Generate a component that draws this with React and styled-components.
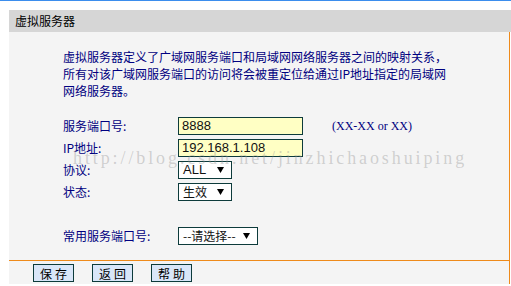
import React from "react";
import styled, { createGlobalStyle } from "styled-components";

const GlobalStyle = createGlobalStyle`
  html, body { margin: 0; padding: 0; background: #ffffff; }
  body {
    font-family: "Noto Sans CJK SC", "Liberation Sans", sans-serif;
    font-size: 12px;
  }
`;

const Page = styled.div`
  border-top: 1px solid #3b8ded;
  padding: 9px 0 0 9px;
  width: 502px;
`;

const Header = styled.div`
  height: 22px;
  line-height: 22px;
  background: #d6d6d6;
  color: #000;
  padding-left: 6px;
  font-size: 12px;
`;

const Body = styled.div`
  position: relative;
  background: #f4f4f4;
  border-right: 1px solid #ee8a1a;
  margin-right: 1px;
  height: 252px;
  display: flex;
  flex-direction: column;
`;

const Desc = styled.div`
  margin: 16px 0 0 54px;
  line-height: 17px;
  color: #000080;
  font-size: 12px;
  white-space: nowrap;
`;

const Form = styled.div`
  margin: 16px 0 0 54px;
  display: grid;
  grid-template-columns: 115px auto;
  grid-auto-rows: 22px;
  align-items: center;
  justify-items: start;
`;

const Label = styled.div`
  color: #000080;
  font-size: 12px;
  line-height: 22px;
`;

const Field = styled.div`
  display: flex;
  align-items: center;
`;

const Input = styled.div`
  box-sizing: border-box;
  width: ${(p) => p.$w}px;
  height: 18px;
  border: 1px solid #0d3b3b;
  background: #ffffc4;
  padding-left: 3px;
  font-family: "Liberation Sans", Arial, sans-serif;
  font-size: 13px;
  line-height: 16px;
  color: #111;
`;

const Select = styled.div`
  box-sizing: border-box;
  width: ${(p) => p.$w}px;
  height: 18px;
  border: 1px solid #0d3b3b;
  background: #ffffff;
  padding: 0 7px 0 4px;
  display: flex;
  align-items: center;
  justify-content: space-between;
  font-family: ${(p) => (p.$latin ? '"Liberation Sans", Arial, sans-serif' : '"Noto Sans CJK SC", sans-serif')};
  font-size: ${(p) => (p.$latin ? 13 : 12)}px;
  line-height: 16px;
  color: #111;
`;

const Hint = styled.span`
  margin-left: 29px;
  font-family: "Liberation Serif", serif;
  font-size: 12px;
  color: #000080;
`;

const Spacer = styled.div`
  grid-column: 1 / span 2;
`;

const Footer = styled.div`
  margin-top: auto;
  border-top: 1px solid #ee8a1a;
  height: 24px;
  padding: 3px 0 0 24px;
  box-sizing: border-box;
  display: flex;
  align-items: flex-start;
  gap: 18px;
`;

const Button = styled.div`
  box-sizing: border-box;
  width: 41px;
  height: 18px;
  border: 1px solid #0d3b3b;
  background: #d9e6f8;
  display: flex;
  align-items: center;
  justify-content: center;
  font-size: 12px;
  letter-spacing: 3px;
  padding-left: 3px;
  color: #000;
`;

const Watermark = styled.div`
  position: absolute;
  left: 64px;
  top: 116px;
  font-family: "Liberation Serif", serif;
  font-size: 18px;
  letter-spacing: 2.9px;
  line-height: 20px;
  color: rgba(150, 150, 150, 0.4);
  pointer-events: none;
  white-space: nowrap;
`;

const Arrow = () => (
  <svg width="7" height="6" viewBox="0 0 7 6">
    <path d="M0 0 H7 L3.5 6 Z" fill="#000" />
  </svg>
);

export default function App() {
  return (
    <>
      <GlobalStyle />
      <Page>
        <Header>虚拟服务器</Header>
        <Body>
          <Desc>
            虚拟服务器定义了广域网服务端口和局域网网络服务器之间的映射关系，
            <br />
            所有对该广域网服务端口的访问将会被重定位给通过IP地址指定的局域网
            <br />
            网络服务器。
          </Desc>
          <Form>
            <Label>服务端口号:</Label>
            <Field>
              <Input $w={125}>8888</Input>
              <Hint>(XX-XX or XX)</Hint>
            </Field>
            <Label>IP地址:</Label>
            <Field>
              <Input $w={125}>192.168.1.108</Input>
            </Field>
            <Label>协议:</Label>
            <Field>
              <Select $w={54} $latin>
                ALL <Arrow />
              </Select>
            </Field>
            <Label>状态:</Label>
            <Field>
              <Select $w={54}>
                生效 <Arrow />
              </Select>
            </Field>
            <Spacer />
            <Label>常用服务端口号:</Label>
            <Field>
              <Select $w={80}>
                --请选择-- <Arrow />
              </Select>
            </Field>
          </Form>
          <Watermark>http://blog.csdn.net/jinzhichaoshuiping</Watermark>
          <Footer>
            <Button>保存</Button>
            <Button>返回</Button>
            <Button>帮助</Button>
          </Footer>
        </Body>
      </Page>
    </>
  );
}
